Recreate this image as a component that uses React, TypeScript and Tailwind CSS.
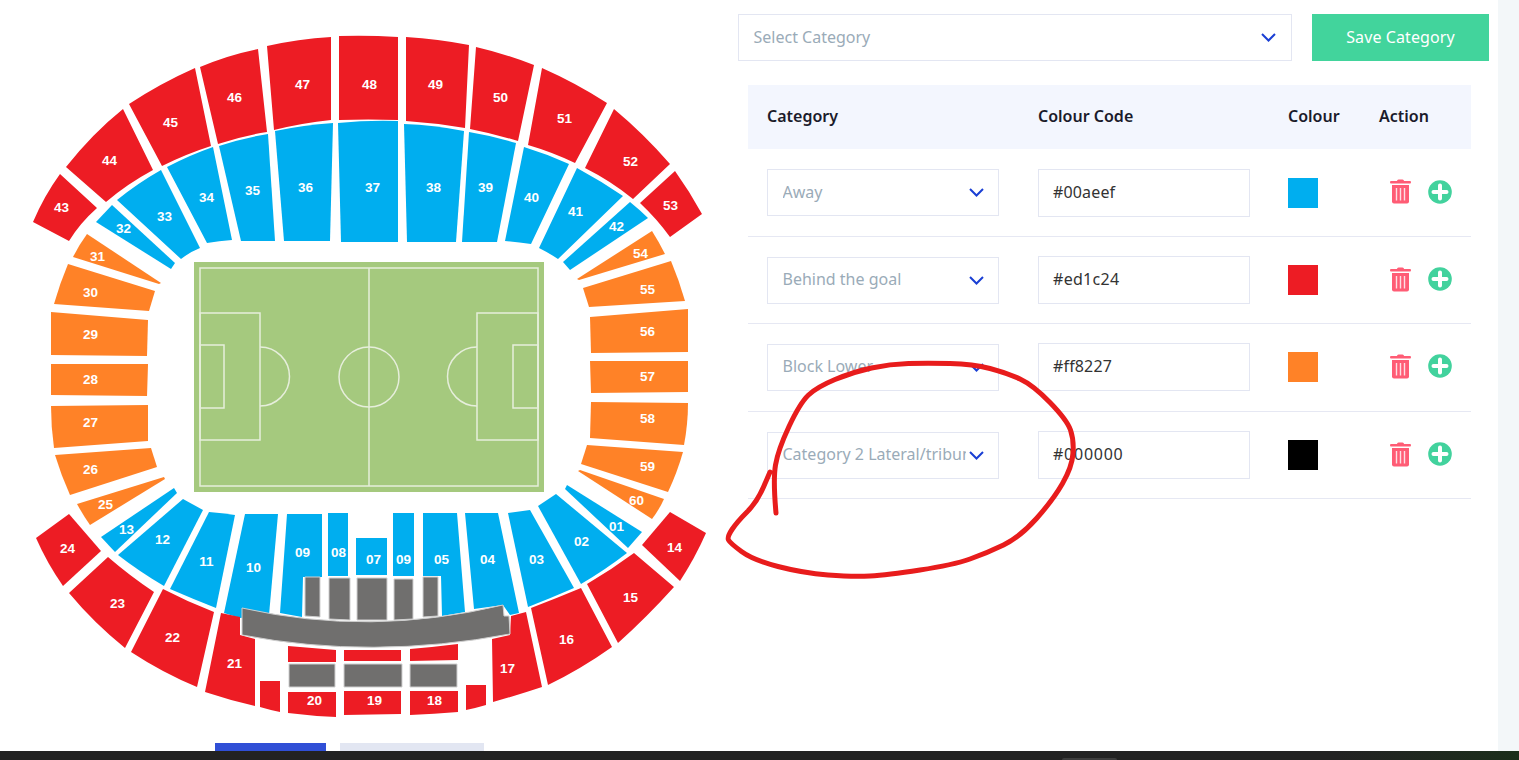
import React from "react";

const RED = "#ed1c24";
const BLUE = "#00aeef";
const ORANGE = "#ff8227";
const GRAY = "#706f6e";

const redShapes = [
  "M60 174 L97 208 Q80 223 69 241 L33 222 Q44 196 60 174Z",
  "M66 167 Q93 133 123 109 L153 170 Q127 184 106 202Z",
  "M129 104 Q161 83 195 68 L211 146 Q186 154 162 166Z",
  "M200 67 Q228 55 258 49 L267 132 Q242 136 218 144Z",
  "M267 46 Q298 39 331 37 L331 120 Q302 123 274 130Z",
  "M339 36 Q368 35 398 37 L398 120 Q368 119 339 120Z",
  "M406 37 Q438 39 469 45 L465 128 Q436 123 406 121Z",
  "M476 47 Q506 54 534 65 L518 141 Q495 134 470 129Z",
  "M542 68 Q576 83 607 103 L575 163 Q552 152 528 145Z",
  "M614 109 Q644 134 670 164 L633 199 Q611 181 585 168Z",
  "M675 171 Q690 192 702 214 L670 237 Q657 219 640 203Z",
  "M69 514 L101 551 L63 586 Q47 563 36 538Z",
  "M108 557 Q130 576 154 592 L125 648 Q94 623 69 593Z",
  "M163 589 Q188 602 214 612 L197 687 Q163 673 131 652Z",
  "M221 613 L240 617 L240 635 L255 639 L255 706 Q229 700 205 692Z",
  "M260 681 L280 681 L280 712 Q270 710 260 707Z",
  "M288 646 Q312 648 336 650 L336 662 L288 662Z",
  "M288 692 L336 692 L336 717 Q312 716 288 713Z",
  "M344 650 L401 650 L401 661 L344 661Z",
  "M344 691 L401 691 L401 714 L344 715Z",
  "M410 649 Q434 647 458 644 L458 660 L410 661Z",
  "M410 691 L458 691 L458 712 Q434 714 410 715Z",
  "M466 685 L486 685 L486 705 Q476 708 466 710Z",
  "M526 612 L542 687 Q518 695 493 702 L492 639 L510 635 L511 616Z",
  "M531 608 Q557 598 581 588 L612 647 Q581 669 548 685Z",
  "M587 584 Q611 570 634 553 L674 587 Q647 617 618 643Z",
  "M642 545 L670 512 L706 533 Q695 558 680 581Z",
];

const blueShapes = [
  "M112 205 L175 263 L171 269 L96 222Z",
  "M117 200 Q138 183 161 170 L200 248 Q190 252 181 259Z",
  "M167 167 Q190 155 213 147 L232 240 Q219 241 207 243Z",
  "M219 146 Q243 138 268 134 L275 241 L241 241Z",
  "M275 131 Q304 125 333 123 L330 241 L284 241Z",
  "M338 123 Q368 120 398 121 L398 242 L341 242Z",
  "M404 124 Q434 125 464 131 L456 242 L407 242Z",
  "M469 132 Q493 136 516 143 L497 242 L462 242Z",
  "M524 147 Q547 154 569 164 L531 244 Q518 242 505 241Z",
  "M577 168 Q601 181 623 196 L558 259 Q549 253 539 248Z",
  "M630 202 Q640 210 648 218 L570 270 L563 262Z",
  "M174 488 L177 493 L115 552 L101 537Z",
  "M183 499 L203 510 L164 586 Q140 572 118 555Z",
  "M209 512 Q222 513 235 515 L216 608 Q193 599 170 589Z",
  "M245 514 L278 514 L269 615 L240 618 L224 613Z",
  "M287 514 L322 514 L322 577 L303 577 L302 617 L280 613Z",
  "M328 513 L348 513 L348 576 L328 576Z",
  "M356 538 L387 538 L387 575 L356 575Z",
  "M393 513 L414 513 L414 576 L393 576Z",
  "M423 513 L457 513 L465 612 L442 616 L441 576 L423 576Z",
  "M465 513 L498 513 L519 613 L510 615 L503 605 L474 609Z",
  "M508 513 L530 510 L574 588 Q551 598 528 607Z",
  "M538 506 L556 494 L627 553 Q605 570 581 584Z",
  "M567 485 L642 532 L628 548 L565 489Z",
];

const orangeShapes = [
  "M87 234 L161 283 L159 284 L73 257 Q79 245 87 234Z",
  "M68 264 L155 291 L149 311 L54 304 Q60 283 68 264Z",
  "M51 312 L148 320 L147 356 L51 355Z",
  "M51 364 L148 364 L147 396 L51 395Z",
  "M51 406 L148 405 L148 441 L54 448 Q51 427 51 406Z",
  "M55 455 L151 448 L157 467 L70 495 Q61 475 55 455Z",
  "M164 477 L165 479 L90 525 Q83 515 77 504Z",
  "M652 231 Q659 242 665 254 L579 280 L577 279Z",
  "M671 261 Q679 280 685 301 L589 307 L583 288Z",
  "M688 309 L688 352 L591 353 L590 317Z",
  "M590 361 L688 361 L688 392 L591 393Z",
  "M591 402 L688 403 Q688 424 684 445 L590 438Z",
  "M587 445 L683 452 Q677 473 668 492 L581 464Z",
  "M578 471 L580 470 L664 499 Q659 510 652 519Z",
];

const grayShapes = [
  "M305 577 L320 577 L320 617 L305 616Z",
  "M329 578 L350 578 L350 620 L329 619Z",
  "M357 578 L387 578 L387 620 L357 620Z",
  "M394 579 L413 579 L413 619 L394 620Z",
  "M423 577 L438 577 L438 616 L423 617Z",
  "M289 664 L335 664 L335 687 L289 687Z",
  "M344 664 L402 664 L402 687 L344 687Z",
  "M410 664 L457 664 L457 687 L410 687Z",
  "M242 608 Q370 637 503 605 L504 616 L509 616 L510 634 Q372 660 242 635Z",
];

const labels: [string, number, number][] = [
  ["43", 61, 207], ["44", 109, 160], ["45", 170, 122], ["46", 234, 97], ["47", 302, 84], ["48", 369, 84],
  ["49", 435, 84], ["50", 500, 97], ["51", 564, 118], ["52", 630, 161], ["53", 670, 205],
  ["32", 123, 228], ["33", 164, 216], ["34", 206, 197], ["35", 252, 190], ["36", 305, 187], ["37", 372, 187],
  ["38", 433, 187], ["39", 485, 187], ["40", 531, 197], ["41", 575, 211], ["42", 616, 226],
  ["31", 97, 256], ["30", 90, 292], ["29", 90, 334], ["28", 90, 379], ["27", 90, 422], ["26", 90, 469], ["25", 105, 504],
  ["54", 640, 253], ["55", 647, 289], ["56", 647, 331], ["57", 647, 376], ["58", 647, 418], ["59", 647, 466], ["60", 636, 500],
  ["24", 67, 548], ["13", 126, 529], ["12", 162, 539], ["11", 206, 561], ["10", 253, 567], ["09", 302, 552], ["08", 338, 552],
  ["07", 373, 559], ["09", 403, 559], ["05", 441, 559], ["04", 487, 559], ["03", 536, 559], ["02", 581, 541], ["01", 616, 526],
  ["14", 674, 547], ["23", 117, 603], ["22", 172, 637], ["21", 234, 663], ["20", 314, 700], ["19", 374, 700], ["18", 434, 700],
  ["17", 507, 668], ["16", 566, 639], ["15", 630, 597],
];

function Stadium() {
  return (
    <svg width="738" height="743" viewBox="0 0 738 743" className="block">
      <rect x="194" y="262" width="350" height="230" fill="#a5c97e" />
      <g fill="none" stroke="#e6eedb" strokeWidth="1.5">
        <rect x="200" y="268" width="338" height="218" />
        <line x1="369" y1="268" x2="369" y2="486" />
        <circle cx="369" cy="377" r="30" />
        <rect x="200" y="313" width="60" height="127" />
        <rect x="200" y="345" width="24" height="63" />
        <path d="M260 347 A29.5 29.5 0 0 1 260 406" />
        <rect x="477" y="313" width="61" height="127" />
        <rect x="513" y="345" width="25" height="63" />
        <path d="M477 347 A29.5 29.5 0 0 0 477 406" />
      </g>
      {orangeShapes.map((d) => <path key={d} d={d} fill={ORANGE} />)}
      {blueShapes.map((d) => <path key={d} d={d} fill={BLUE} />)}
      {redShapes.map((d) => <path key={d} d={d} fill={RED} />)}
      {grayShapes.map((d) => <path key={d} d={d} fill={GRAY} stroke="#cfcfcf" strokeWidth="1" />)}
      {labels.map(([t, x, y]) => (
        <text key={t + x} x={x + 0.5} y={y + 5} textAnchor="middle" fill="#fff" className="font-['Liberation_Sans'] text-[13.5px] font-bold">
          {t}
        </text>
      ))}
    </svg>
  );
}

function Chevron({ className }: { className: string }) {
  return (
    <svg viewBox="0 0 15 9" className={className} fill="none" stroke="#1a3fd4" strokeWidth="2">
      <path d="M1 1 L7.5 7.5 L14 1" />
    </svg>
  );
}

function Trash() {
  return (
    <svg width="21" height="25" viewBox="0 0 21 25" className="block">
      <path d="M7 2 Q7 0.5 8.5 0.5 L12.5 0.5 Q14 0.5 14 2 L20 2 Q21 2 21 3.2 Q21 4.5 20 4.5 L1 4.5 Q0 4.5 0 3.2 Q0 2 1 2Z" fill="#ff5c75" />
      <path d="M2 6 L19 6 L19 22.5 Q19 24.5 17 24.5 L4 24.5 Q2 24.5 2 22.5Z" fill="#ff5c75" />
      <path d="M6.5 9 V21.5 M10.5 9 V21.5 M14.5 9 V21.5" stroke="#ffdfe4" strokeWidth="1.4" />
    </svg>
  );
}

function PlusCircle() {
  return (
    <svg width="24" height="24" viewBox="0 0 24 24" className="block">
      <circle cx="12" cy="12" r="11.8" fill="#42d29d" />
      <path d="M12 5.5 V18.5 M5.5 12 H18.5" stroke="#fff" strokeWidth="4" strokeLinecap="round" />
    </svg>
  );
}

const rows = [
  { cat: "Away", code: "#00aeef", color: "bg-[#00aeef]", row: "h-[88px]", track: "tracking-[0.15px]" },
  { cat: "Behind the goal", code: "#ed1c24", color: "bg-[#ed1c24]", row: "h-[87px]", track: "tracking-[0.3px]" },
  { cat: "Block Lower", code: "#ff8227", color: "bg-[#ff8227]", row: "h-[88px] pb-px", track: "tracking-[0.15px]" },
  { cat: "Category 2 Lateral/tribuna", code: "#000000", color: "bg-black", row: "h-[87px]", track: "tracking-[0.75px]" },
];

const penPoints: [number, number][] = [
  [776, 513], [773, 480], [778, 450], [800, 403], [817, 387], [853, 372], [890, 364], [927, 363], [973, 364],
  [1007, 373], [1033, 385], [1067, 420], [1074, 440], [1072, 467], [1053, 500], [1020, 537], [987, 553],
  [953, 565], [887, 575], [853, 577], [803, 573], [753, 560], [730, 543], [727, 537], [737, 522], [757, 502], [770, 472],
];

function penPath() {
  let d = `M${penPoints[0][0]} ${penPoints[0][1]}`;
  for (let i = 1; i < penPoints.length - 1; i++) {
    const [x, y] = penPoints[i];
    const [nx, ny] = penPoints[i + 1];
    d += ` Q${x} ${y} ${(x + nx) / 2} ${(y + ny) / 2}`;
  }
  const last = penPoints[penPoints.length - 1];
  return `${d} L${last[0]} ${last[1]}`;
}

export default function App() {
  return (
    <div className="relative flex h-[760px] w-[1519px] flex-col overflow-hidden bg-white font-['Noto_Sans',sans-serif]">
      <div className="flex h-[751px]">
        <div className="w-[738px] shrink-0">
          <Stadium />
          <div className="flex gap-[14px] pl-[215px]">
            <div className="h-[8px] w-[111px] bg-[#304fd6]" />
            <div className="h-[8px] w-[144px] bg-[#e2e6f2]" />
          </div>
        </div>
        <div className="w-[760px] shrink-0 pt-[14px]">
          <div className="flex gap-[20px]">
            <div className="flex h-[47px] w-[554px] items-center justify-between border border-[#e3e6f2] pb-[2px] pl-[14.5px] pr-[15px] text-[16px] text-[#9aabb8]">
              <span>Select Category</span>
              <Chevron className="mt-[2px] w-[15px]" />
            </div>
            <div className="flex h-[47px] w-[177px] items-center justify-center bg-[#42d49c] pb-[2px] text-[16px] tracking-[0.1px] text-white">
              Save Category
            </div>
          </div>
          <div className="ml-[10px] mt-[24px] w-[723px]">
            <div className="flex h-[64px] items-center bg-[#f3f6fe] pb-[2px] pl-[19px] text-[16px] font-semibold text-[#1b1b2b]">
              <div className="w-[271px]">Category</div>
              <div className="w-[250px]">Colour Code</div>
              <div className="w-[91px]">Colour</div>
              <div>Action</div>
            </div>
            {rows.map((r) => (
              <div key={r.code} className={`flex items-center border-b border-[#e6e8f3] pl-[19px] text-[16px] ${r.row}`}>
                <div className="w-[271px]">
                  <div className="flex h-[47px] w-[232px] items-center border border-[#e3e6f2] pb-[2px] pl-[14.5px] text-[#9aabb8]">
                    <span className="w-[183px] overflow-hidden whitespace-nowrap">{r.cat}</span>
                    <Chevron className="ml-[3px] mt-[2px] w-[15px]" />
                  </div>
                </div>
                <div className="w-[250px]">
                  <div className={`flex h-[48px] w-[212px] items-center border border-[#e3e6f2] pb-[2px] pl-[14px] text-[#333] ${r.track}`}>{r.code}</div>
                </div>
                <div className="w-[102px]">
                  <div className={`h-[30px] w-[30px] ${r.color}`} />
                </div>
                <div className="mb-[2px] flex items-center gap-[17px]">
                  <Trash />
                  <PlusCircle />
                </div>
              </div>
            ))}
          </div>
        </div>
        <div className="flex-1 bg-[#f3f7f9]" />
      </div>
      <div className="flex h-[9px] items-end bg-gradient-to-r from-[#222222] from-[88%] to-[#1b2e1b] pl-[1062px]">
        <div className="h-[2px] w-[55px] rounded-t-sm bg-[#3d3d3d]" />
      </div>
      <svg className="absolute left-0 top-0" width="1519" height="760" fill="none">
        <path d={penPath()} stroke="#e81c1c" strokeWidth="5" strokeLinecap="round" strokeLinejoin="round" />
      </svg>
    </div>
  );
}
